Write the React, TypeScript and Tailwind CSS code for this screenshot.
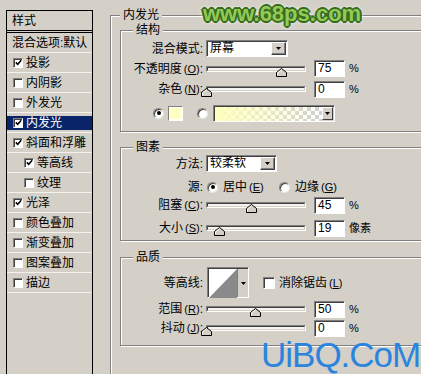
import { clsx as cn } from 'clsx'
import type { ReactNode } from 'react'

// 图层样式 - 内发光 面板

const layers = [
  { label: '投影', checked: true },
  { label: '内阴影' },
  { label: '外发光' },
  { label: '内发光', checked: true, active: true },
  { label: '斜面和浮雕', checked: true },
  { label: '等高线', checked: true, indent: true },
  { label: '纹理', indent: true },
  { label: '光泽', checked: true },
  { label: '颜色叠加' },
  { label: '渐变叠加' },
  { label: '图案叠加' },
  { label: '描边' },
]

function Check({ checked, big }: { checked?: boolean; big?: boolean }) {
  return (
    <span
      className={cn(
        'flex items-center justify-center shrink-0 bg-white border border-t-[#808080] border-l-[#808080] border-b-white border-r-white shadow-[inset_1px_1px_0_#404040]',
        big ? 'w-[12px] h-[12px]' : 'w-[10px] h-[10px]',
      )}
    >
      {checked && (
        <svg width="7" height="7" viewBox="0 0 7 7">
          <path d="M0.8 3.4 L2.7 5.3 L6.2 1.2" fill="none" stroke="#000" strokeWidth="1.5" />
        </svg>
      )}
    </span>
  )
}

function Radio({ on }: { on?: boolean }) {
  return (
    <span className="flex items-center justify-center shrink-0 w-[11px] h-[11px] rounded-full bg-white border border-t-[#808080] border-l-[#808080] border-b-[#e8e6e0] border-r-[#e8e6e0] shadow-[inset_1px_1px_0_#404040]">
      {on && <span className="w-[4px] h-[4px] rounded-full bg-black" />}
    </span>
  )
}

function Arrow() {
  return (
    <svg width="5" height="3" viewBox="0 0 5 3">
      <path d="M0 0h5L2.5 3z" fill="#000" />
    </svg>
  )
}

function DropBtn() {
  return (
    <span className="flex items-center justify-center shrink-0 w-[15px] h-[13px] mt-[1px] mr-[1px] bg-[#d4d0c8] border border-t-white border-l-white border-b-[#404040] border-r-[#404040] shadow-[inset_-1px_-1px_0_#808080]">
      <Arrow />
    </span>
  )
}

function Select({ value, className }: { value: string; className: string }) {
  return (
    <div
      className={cn(
        'flex h-[17px] bg-white border border-t-[#808080] border-l-[#808080] border-b-white border-r-white shadow-[inset_1px_1px_0_#404040]',
        className,
      )}
    >
      <span className="flex-1 pl-[3px] leading-[15px]">{value}</span>
      <DropBtn />
    </div>
  )
}

function Field({ value }: { value: string }) {
  return (
    <span className="block shrink-0 w-[31px] h-[17px] ml-[8px] pl-[3px] leading-[15px] bg-white border border-t-[#808080] border-l-[#808080] border-b-white border-r-white shadow-[inset_1px_1px_0_#404040]">
      {value}
    </span>
  )
}

function Slider({ pos }: { pos: number }) {
  return (
    <div className="relative shrink-0 w-[100px] h-[6px] ml-[3px]">
      <div className="h-full border border-t-[#808080] border-l-[#808080] border-b-white border-r-white">
        <div className="h-full border border-t-[#404040] border-l-[#404040] border-b-[#d4d0c8] border-r-[#d4d0c8] bg-[#f4f3f0]" />
      </div>
      <svg
        className="absolute top-[2px]"
        style={{ left: pos - 5 }}
        width="11"
        height="9"
        viewBox="0 0 11 9"
      >
        <path d="M0.5 8.5V4.5L5.5 0.5L10.5 4.5V8.5Z" fill="#d4d0c8" stroke="#000" strokeWidth="1" />
        <path d="M1.5 7.5V5L5.5 1.8" fill="none" stroke="#fff" strokeWidth="1" />
      </svg>
    </div>
  )
}

function Label({ children }: { children: ReactNode }) {
  return <span className="block shrink-0 w-[78px] text-right whitespace-nowrap">{children}</span>
}

function Key({ k }: { k: string }) {
  return (
    <span className="ml-[2px] text-[11px]">
      (<span className="underline">{k}</span>)
    </span>
  )
}

function Group({ title, className, children }: { title: string; className: string; children: ReactNode }) {
  return (
    <fieldset
      className={cn(
        'w-[320px] pl-[4px] border border-[#808080] shadow-[inset_1px_1px_0_#fff,1px_1px_0_#fff]',
        className,
      )}
    >
      <legend className="ml-[8px] px-[3px] leading-[14px] bg-[#d4d0c8]">{title}</legend>
      {children}
    </fieldset>
  )
}

function SliderRow({ label, k, pos, value, unit, className }: {
  label: string
  k: string
  pos: number
  value: string
  unit: string
  className: string
}) {
  return (
    <div className={cn('flex items-center', className)}>
      <Label>
        {label}
        <Key k={k} />:
      </Label>
      <Slider pos={pos} />
      <Field value={value} />
      <span className="ml-[4px] text-[11px]">{unit}</span>
    </div>
  )
}

export default function App() {
  return (
    <div className="relative flex items-start w-[421px] h-[374px] overflow-hidden bg-[#d4d0c8] text-[12px] text-black font-['Liberation_Sans','Noto_Sans_CJK_SC',sans-serif]">
      {/* 样式列表 */}
      <div className="shrink-0 w-[87px] h-[400px] ml-[6px] mt-[10px] border border-black">
        <div className="flex items-center h-[22px] pl-[5px] border-b-[3px] border-double border-black">样式</div>
        <div className="flex items-center h-[20px] pl-[5px] border-b border-[#f3f2ee] whitespace-nowrap">
          混合选项:默认
        </div>
        {layers.map((l) => (
          <div key={l.label} className="flex items-center h-[20px] border-b border-[#f3f2ee]">
            <div
              className={cn(
                'flex items-center gap-[3px] w-full h-[14px]',
                l.indent ? 'pl-[17px]' : 'pl-[6px]',
                l.active && 'bg-[#0a246a] text-white',
              )}
            >
              <Check checked={l.checked} />
              <span>{l.label}</span>
            </div>
          </div>
        ))}
      </div>

      {/* 内发光 */}
      <fieldset className="shrink-0 w-[330px] h-[400px] ml-[17px] mt-[8px] pl-[9px] pt-[1px] border border-[#808080] shadow-[inset_1px_1px_0_#fff,1px_1px_0_#fff]">
        <legend className="px-[3px] leading-[14px] bg-[#d4d0c8]">内发光</legend>

        <Group title="结构" className="pt-[3px] pb-[9px]">
          <div className="flex items-center h-[17px]">
            <Label>混合模式:</Label>
            <Select value="屏幕" className="w-[82px] ml-[3px]" />
          </div>
          <SliderRow label="不透明度" k="O" pos={75} value="75" unit="%" className="h-[23px]" />
          <SliderRow label="杂色" k="N" pos={0} value="0" unit="%" className="h-[18px]" />
          <div className="flex items-center h-[18px] mt-[6px]">
            <span className="ml-[28px]">
              <Radio on />
            </span>
            <span className="block w-[15px] h-[15px] ml-[4px] border border-t-[#808080] border-l-[#808080] border-b-white border-r-white shadow-[inset_1px_1px_0_#404040]">
              <span className="block w-full h-full bg-[#ffffc4] border border-white" />
            </span>
            <span className="ml-[14px]">
              <Radio />
            </span>
            <div className="flex w-[122px] h-[17px] ml-[5px] border border-t-[#808080] border-l-[#808080] border-b-white border-r-white shadow-[inset_1px_1px_0_#404040]">
              <span className="flex-1 mt-[1px] ml-[1px] bg-[linear-gradient(to_right,#ffffbe,rgba(255,255,190,0)),repeating-conic-gradient(#cfcfcf_0_25%,#ffffff_0_50%)] [background-size:100%_100%,8px_8px]" />
              <span className="flex items-center justify-center shrink-0 w-[11px] h-[13px] mt-[1px] mr-[1px] bg-[#d4d0c8] border border-t-white border-l-white border-b-[#404040] border-r-[#404040]">
                <Arrow />
              </span>
            </div>
          </div>
        </Group>

        <Group title="图素" className="mt-[8px] pt-[1px] pb-[3px]">
          <div className="flex items-center h-[17px]">
            <Label>方法:</Label>
            <Select value="较柔软" className="w-[71px] ml-[3px]" />
          </div>
          <div className="flex items-center h-[18px] mt-[6px]">
            <Label>源:</Label>
            <span className="ml-[4px]">
              <Radio on />
            </span>
            <span className="block w-[56px] ml-[5px] whitespace-nowrap">
              居中
              <Key k="E" />
            </span>
            <Radio />
            <span className="ml-[5px] whitespace-nowrap">
              边缘
              <Key k="G" />
            </span>
          </div>
          <SliderRow label="阻塞" k="C" pos={45} value="45" unit="%" className="h-[18px]" />
          <SliderRow label="大小" k="S" pos={13} value="19" unit="像素" className="h-[18px] mt-[5px]" />
        </Group>

        <Group title="品质" className="mt-[9px] pt-[3px] pb-[8px]">
          <div className="flex items-center h-[31px]">
            <Label>等高线:</Label>
            <div className="flex shrink-0 w-[42px] h-[31px] ml-[4px] border border-t-[#808080] border-l-[#808080] border-b-white border-r-white shadow-[inset_1px_1px_0_#404040]">
              <svg className="flex-1 h-full mt-[1px] ml-[1px] bg-white" viewBox="0 0 28 28" preserveAspectRatio="none">
                <polygon points="0,28 28,0 28,28" fill="#8a8a8a" />
              </svg>
              <span className="flex items-center justify-center shrink-0 w-[11px] mt-[1px] bg-[#d4d0c8] border-l border-[#808080]">
                <Arrow />
              </span>
            </div>
            <span className="ml-[14px]">
              <Check big />
            </span>
            <span className="ml-[4px] whitespace-nowrap">
              消除锯齿
              <Key k="L" />
            </span>
          </div>
          <SliderRow label="范围" k="R" pos={49} value="50" unit="%" className="h-[18px] mt-[2px]" />
          <SliderRow label="抖动" k="J" pos={0} value="0" unit="%" className="h-[18px] mt-[1px]" />
        </Group>
      </fieldset>

      {/* 水印 */}
      <span className="absolute left-[203px] top-[3px] text-[22px] leading-none font-bold text-[#93c95a] font-['Liberation_Sans',sans-serif] [text-shadow:2px_0_0_#356c18,-2px_0_0_#356c18,0_2px_0_#356c18,0_-2px_0_#356c18,1px_1px_0_#356c18,-1px_-1px_0_#356c18,1px_-1px_0_#356c18,-1px_1px_0_#356c18,0_0_5px_#fff,0_0_5px_#fff]">
        www.68ps.com
      </span>
      <span className="absolute left-[261px] top-[337px] text-[35px] leading-none tracking-[-1px] text-[#2b84dd] font-['Liberation_Sans',sans-serif]">
        UiBQ.CoM
      </span>
    </div>
  )
}
